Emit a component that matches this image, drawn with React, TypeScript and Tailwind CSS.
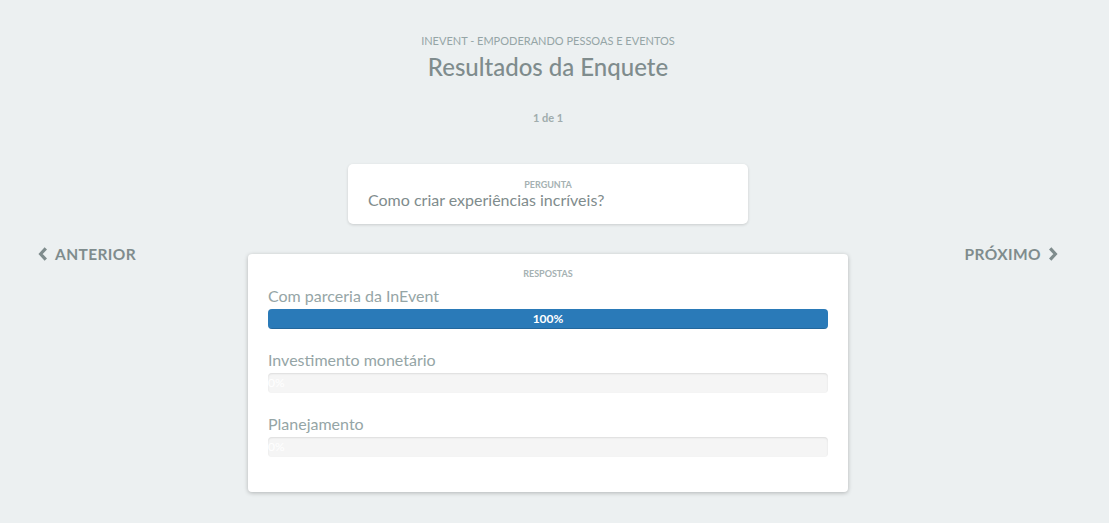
import React from "react";

const answers = [
  { label: "Com parceria da InEvent", pct: 100 },
  { label: "Investimento monetário", pct: 0 },
  { label: "Planejamento", pct: 0 },
];

function Chevron({ dir }: { dir: "left" | "right" }) {
  return (
    <svg width="10" height="14" viewBox="0 0 10 14" className="shrink-0">
      {dir === "left" ? (
        <path d="M7.8 1.3 L2.6 7 L7.8 12.7" fill="none" stroke="currentColor" strokeWidth="3.2" strokeLinejoin="miter" />
      ) : (
        <path d="M2.2 1.3 L7.4 7 L2.2 12.7" fill="none" stroke="currentColor" strokeWidth="3.2" strokeLinejoin="miter" />
      )}
    </svg>
  );
}

export default function App() {
  return (
    <div
      className="w-[1109px] h-[523px] bg-[#ecf0f1] overflow-hidden"
      style={{ fontFamily: "Lato, 'Open Sans', sans-serif" }}
    >
      <div className="w-[1096px] flex flex-col items-center pt-[34px]">
        <div className="text-[11px] leading-[14px] text-[#95a5a6]">
          INEVENT - EMPODERANDO PESSOAS E EVENTOS
        </div>
        <h1 className="text-[24px] leading-[30px] text-[#7f8c8d] mt-[4px] font-medium">Resultados da Enquete</h1>
        <div className="text-[11px] leading-[12px] font-bold text-[#a0acad] mt-[30px]">1 de 1</div>

        <div className="w-[400px] h-[60px] mt-[40px] bg-white rounded-[5px] shadow-[0_1px_3px_rgba(0,0,0,0.15)] px-5 pt-[15px]">
          <div className="text-center text-[9px] leading-[11px] font-bold text-[#a5b1b2]">PERGUNTA</div>
          <div className="text-[16px] leading-[20px] text-[#7f8c8d]">Como criar experiências incríveis?</div>
        </div>

        <div className="w-full grid grid-cols-[1fr_600px_1fr] items-start px-[38px] mt-[20px]">
          <div className="flex justify-start">
            <button className="flex items-center gap-[7px] text-[15.5px] leading-[20px] font-bold text-[#7f8c8d] tracking-wide">
              <Chevron dir="left" />
              ANTERIOR
            </button>
          </div>
          <div className="h-[238px] mt-[10px] bg-white rounded-[4px] shadow-[0_1px_4px_rgba(0,0,0,0.25)] px-5 pt-[14px]">
            <div className="text-center text-[9px] leading-[11px] font-bold text-[#a5b1b2]">RESPOSTAS</div>
            <div className="flex flex-col gap-[21px] mt-[7px]">
              {answers.map((a) => (
                <div key={a.label}>
                  <div className="text-[16px] leading-[20px] text-[#95a5a6]">{a.label}</div>
                  <div className="h-[20px] mt-[3px] rounded-[4px] bg-[#f5f5f5] shadow-[inset_0_1px_2px_rgba(0,0,0,0.1)] overflow-hidden relative">
                    {a.pct > 0 ? (
                      <div
                        className="h-full bg-[#2a7ab8] shadow-[inset_0_-1px_0_rgba(0,0,0,0.15)] text-white text-[12px] leading-[20px] font-bold text-center"
                        style={{ width: `${a.pct}%` }}
                      >
                        {a.pct}%
                      </div>
                    ) : (
                      <div className="text-white text-[12px] leading-[20px]">0%</div>
                    )}
                  </div>
                </div>
              ))}
            </div>
          </div>
          <div className="flex justify-end">
            <button className="flex items-center gap-[7px] text-[15.5px] leading-[20px] font-bold text-[#7f8c8d] tracking-wide">
              PRÓXIMO
              <Chevron dir="right" />
            </button>
          </div>
        </div>
      </div>
    </div>
  );
}
